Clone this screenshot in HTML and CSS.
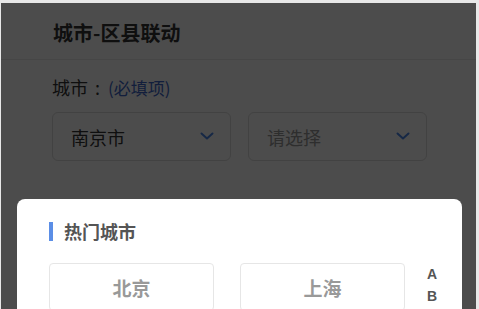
FILE: index.html
```html
<!DOCTYPE html>
<html lang="zh-CN">
<head>
<meta charset="utf-8">
<title>城市-区县联动</title>
<link rel="stylesheet" href="styles.css">
</head>
<body>
<div class="frame">
  <header class="page-head">
    <h1 class="page-title">城市-区县联动</h1>
  </header>
  <section class="form">
    <div class="field-label">城市<span class="colon">:</span><span class="req">(必填项)</span></div>
    <div class="selects">
      <div class="select">
        <span class="select-text">南京市</span>
        <svg class="chev" width="14" height="8" viewBox="0 0 14 8"><path d="M1.5 1.5 L7 6.5 L12.5 1.5" fill="none" stroke="#4a85e8" stroke-width="2" stroke-linecap="round" stroke-linejoin="round"/></svg>
      </div>
      <div class="select">
        <span class="select-text placeholder">请选择</span>
        <svg class="chev" width="14" height="8" viewBox="0 0 14 8"><path d="M1.5 1.5 L7 6.5 L12.5 1.5" fill="none" stroke="#4a85e8" stroke-width="2" stroke-linecap="round" stroke-linejoin="round"/></svg>
      </div>
    </div>
  </section>
  <div class="overlay"></div>
  <div class="popup">
    <div class="popup-title"><span class="bar"></span>热门城市</div>
    <div class="popup-body">
      <div class="cities">
        <div class="city">北京</div>
        <div class="city">上海</div>
      </div>
      <ul class="index">
        <li>A</li>
        <li>B</li>
      </ul>
    </div>
  </div>
</div>
</body>
</html>
```

FILE: styles.css
```css
* { box-sizing: border-box; }
html, body { margin: 0; padding: 0; }
body {
  width: 479px;
  height: 309px;
  overflow: hidden;
  background: #e8e8e8;
  font-family: "Noto Sans CJK SC", "Noto Sans", sans-serif;
}
.frame {
  position: relative;
  margin: 3px 3px 0 1px;
  height: 306px;
  background: #fff;
  overflow: hidden;
}
.page-head {
  height: 57px;
  border-bottom: 1px solid #eaeaea;
  display: flex;
  align-items: center;
  padding: 3px 0 0 52px;
}
.page-title {
  margin: 0;
  font-size: 20px;
  font-weight: 700;
  color: #333;
  line-height: 1;
}
.form {
  padding: 15px 0 0 51px;
}
.field-label {
  font-size: 18px;
  color: #333;
  line-height: 24px;
  display: flex;
  align-items: baseline;
}
.colon {
  margin: 0 8px 0 7px;
}
.req {
  font-size: 17px;
  color: #3c66c8;
}
.selects {
  display: flex;
  gap: 17px;
  margin-top: 12px;
}
.select {
  width: 179px;
  height: 49px;
  border: 1px solid #dcdcdc;
  border-radius: 6px;
  display: flex;
  align-items: center;
  justify-content: space-between;
  padding: 0 16px 0 18px;
}
.select-text {
  font-size: 18px;
  color: #333;
  line-height: 1;
}
.select-text.placeholder { color: #999; }
.chev { display: block; margin-top: -1px; }
.overlay {
  position: absolute;
  inset: 0;
  background: rgba(0, 0, 0, 0.7);
}
.popup {
  position: absolute;
  left: 16px;
  top: 196px;
  width: 445px;
  height: 200px;
  background: #fff;
  border-radius: 8px 8px 0 0;
  padding: 22px 0 0 32px;
}
.popup-title {
  display: flex;
  align-items: center;
  gap: 11px;
  font-size: 18px;
  font-weight: 700;
  color: #555;
  height: 20px;
  line-height: 20px;
}
.bar {
  width: 4px;
  height: 19px;
  background: #5b8ee6;
}
.popup-body {
  display: flex;
  margin-top: 22px;
}
.cities {
  display: flex;
  gap: 26px;
}
.city {
  width: 165px;
  height: 48px;
  border: 1px solid #e6e6e6;
  border-radius: 4px;
  display: flex;
  align-items: center;
  justify-content: center;
  font-size: 19px;
  font-weight: 700;
  color: #999;
}
.index {
  list-style: none;
  margin: 0 0 0 21px;
  padding: 0;
  font-family: "Liberation Sans", "Noto Sans", sans-serif;
  font-size: 14px;
  font-weight: 700;
  color: #555;
  line-height: 22px;
}
.index li { text-align: center; width: 12px; }
```
